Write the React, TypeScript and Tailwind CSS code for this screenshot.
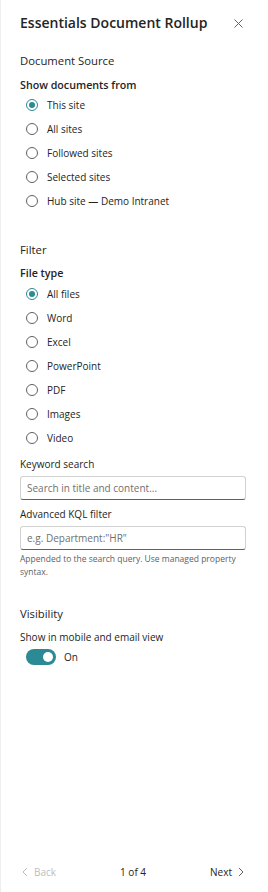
import React, { useState } from "react";

function Radio({ label, checked, onClick }: { label: string; checked: boolean; onClick: () => void }) {
  return (
    <div className="flex h-[24px] cursor-pointer items-center pl-[6px]" onClick={onClick}>
      <span
        className={`flex h-[12px] w-[12px] shrink-0 items-center justify-center rounded-full border ${
          checked ? "border-[#2b8a93]" : "border-[#616161]"
        }`}
      >
        {checked && <span className="h-[6px] w-[6px] rounded-full bg-[#2b8a93]" />}
      </span>
      <span className="ml-[9px] text-[10px] leading-[14px] text-[#242424]">{label}</span>
    </div>
  );
}

export default function App() {
  const [src, setSrc] = useState(0);
  const [ft, setFt] = useState(0);
  const [on, setOn] = useState(true);
  const sources = ["This site", "All sites", "Followed sites", "Selected sites", "Hub site — Demo Intranet"];
  const types = ["All files", "Word", "Excel", "PowerPoint", "PDF", "Images", "Video"];
  return (
    <div className="flex h-[892px] w-[268px] flex-col border-l border-[#eeeeee] bg-white font-['Open_Sans',sans-serif] text-[#242424]">
      <div className="flex items-center justify-between pl-[19px] pr-[25px] pt-[12px]">
        <div className="text-[14px] font-semibold leading-[22px] text-[#242424]">Essentials Document Rollup</div>
        <svg width="9" height="9" viewBox="0 0 9 9" className="text-[#616161]">
          <path d="M0.5 0.5 L8.5 8.5 M8.5 0.5 L0.5 8.5" stroke="currentColor" strokeWidth="1" />
        </svg>
      </div>

      <div className="pl-[19px] pr-[22px]">
        <div className="mt-[17px] text-[11.3px] leading-[20px]">Document Source</div>
        <div className="mt-[6px] text-[10.7px] font-semibold leading-[16px]">Show documents from</div>
        <div>
          {sources.map((s, i) => (
            <Radio key={s} label={s} checked={src === i} onClick={() => setSrc(i)} />
          ))}
        </div>

        <div className="mt-[27px] text-[11.3px] leading-[20px]">Filter</div>
        <div className="mt-[5px] text-[10.7px] font-semibold leading-[16px]">File type</div>
        <div className="mt-[1px]">
          {types.map((s, i) => (
            <Radio key={s} label={s} checked={ft === i} onClick={() => setFt(i)} />
          ))}
        </div>

        <div className="mt-[6px] text-[10px] leading-[16px]">Keyword search</div>
        <input
          placeholder="Search in title and content..."
          className="mt-[4px] h-[24px] w-full rounded-[3px] border border-[#d1d1d1] border-b-[#616161] px-[6px] text-[10px] text-[#242424] outline-none placeholder:text-[#707070]"
        />
        <div className="mt-[6px] text-[10px] leading-[16px]">Advanced KQL filter</div>
        <input
          placeholder={'e.g. Department:"HR"'}
          className="mt-[4px] h-[24px] w-full rounded-[3px] border border-[#d1d1d1] border-b-[#616161] px-[6px] text-[10px] text-[#242424] outline-none placeholder:text-[#707070]"
        />
        <div className="mt-[2px] text-[8.5px] leading-[13px] text-[#616161]">
          Appended to the search query. Use managed property syntax.
        </div>

        <div className="mt-[26px] text-[11.3px] leading-[20px]">Visibility</div>
        <div className="mt-[5px] text-[10px] leading-[16px]">Show in mobile and email view</div>
        <div className="mt-[4px] flex items-center pl-[6px]">
          <button
            onClick={() => setOn(!on)}
            className={`flex h-[16px] w-[30px] items-center rounded-full px-[3px] ${
              on ? "justify-end bg-[#2b8a93]" : "justify-start border border-[#616161] bg-white"
            }`}
          >
            <span className={`h-[10px] w-[10px] rounded-full ${on ? "bg-white" : "bg-[#616161]"}`} />
          </button>
          <span className="ml-[8px] text-[10px] leading-[16px]">{on ? "On" : "Off"}</span>
        </div>
      </div>

      <div className="flex-1" />

      <div className="flex items-center justify-between pb-[12px] pl-[21px] pr-[24px] text-[10px] leading-[16px]">
        <div className="flex items-center text-[#bdbdbd]">
          <svg width="6" height="10" viewBox="0 0 6 10" className="mr-[6px]">
            <path d="M5 1 L1 5 L5 9" fill="none" stroke="currentColor" strokeWidth="1" />
          </svg>
          Back
        </div>
        <div className="text-[#242424]">1 of 4</div>
        <div className="flex items-center text-[#242424]">
          Next
          <svg width="6" height="10" viewBox="0 0 6 10" className="ml-[6px] text-[#616161]">
            <path d="M1 1 L5 5 L1 9" fill="none" stroke="currentColor" strokeWidth="1" />
          </svg>
        </div>
      </div>
    </div>
  );
}
